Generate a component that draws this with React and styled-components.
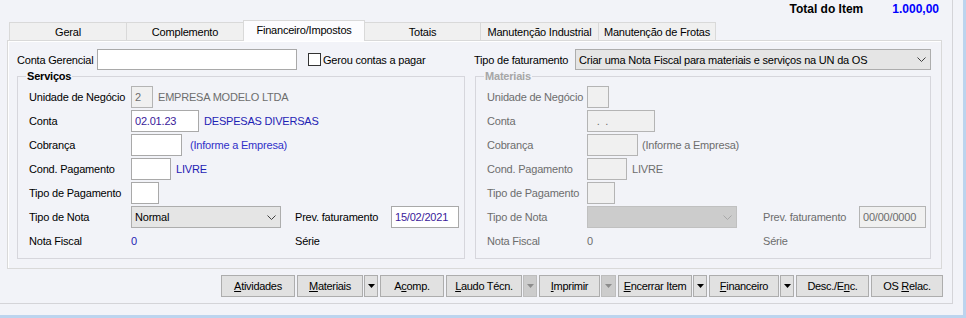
import React from 'react';
import styled, { createGlobalStyle } from 'styled-components';

const Global = createGlobalStyle`
  html, body { margin: 0; padding: 0; background: #f2f3f8; }
  body {
    font-family: "Liberation Sans", Arial, sans-serif;
    font-size: 11px;
    letter-spacing: -0.2px;
    color: #000;
  }
  * { box-sizing: border-box; }
`;

const Window = styled.div`
  width: 966px;
  height: 318px;
  border-right: 3px solid #bcd4ee;
  border-bottom: 3px solid #bcd4ee;
  background: #f2f3f8;
`;

const Frame = styled.div`
  width: 953px;
  height: 304px;
  border-right: 1px solid #d4d4d8;
  border-bottom: 1px solid #d4d4d8;
  display: flex;
  flex-direction: column;
`;

const Header = styled.div`
  height: 20px;
  display: flex;
  justify-content: flex-end;
  align-items: flex-start;
  gap: 29px;
  padding-right: 13px;
  font-size: 12px;
  font-weight: bold;
  line-height: 18px;
  letter-spacing: 0;
`;

const Total = styled.span`
  color: #0000ff;
`;

const TabStrip = styled.div`
  display: flex;
  align-items: flex-end;
  height: 20px;
  padding-left: 9px;
  position: relative;
  z-index: 1;
`;

const Tab = styled.div`
  width: ${p => p.$w}px;
  height: ${p => (p.$active ? 21 : 18)}px;
  margin-right: -1px;
  margin-bottom: ${p => (p.$active ? -1 : 0)}px;
  border: 1px solid #d9d9d9;
  border-bottom: none;
  background: ${p => (p.$active ? '#fcfcfe' : '#f0f0f0')};
  display: flex;
  align-items: center;
  justify-content: center;
  padding-bottom: ${p => (p.$active ? 2 : 0)}px;
  position: relative;
  z-index: ${p => (p.$active ? 2 : 1)};
`;

const Panel = styled.div`
  margin-left: 7px;
  width: 935px;
  height: 229px;
  border: 1px solid #d9d9d9;
  box-shadow: inset 1px 1px 0 #ffffff;
  padding: 8px 10px 0 9px;
  display: flex;
  flex-direction: column;
`;

const TopRow = styled.div`
  display: flex;
  align-items: center;
  height: 21px;
`;

const Label = styled.span`
  width: ${p => p.$w}px;
  flex-shrink: 0;
  white-space: nowrap;
  color: ${p => (p.$dim ? '#6d6d6d' : '#000')};
`;

const TextBox = styled.input`
  width: ${p => p.$w}px;
  height: ${p => p.$h || 22}px;
  flex-shrink: 0;
  margin: 0;
  padding: 0 3px;
  border: 1px solid ${p => (p.$off ? '#b4b4b4' : '#a9a9a9')};
  background: ${p => (p.$off ? '#f0f0f0' : '#ffffff')};
  color: ${p => (p.$off ? '#6d6d6d' : '#3a1a9a')};
  font: inherit;
  letter-spacing: inherit;
  outline: none;
  white-space: pre;
`;

const CheckWrap = styled.label`
  display: flex;
  align-items: center;
  width: 166px;
  margin-left: 11px;
  flex-shrink: 0;
`;

const CheckBox = styled.span`
  width: 13px;
  height: 13px;
  border: 1px solid #333333;
  background: #ffffff;
  margin-right: 2px;
  flex-shrink: 0;
`;

const ComboBox = styled.div`
  width: ${p => p.$w}px;
  height: ${p => p.$h || 22}px;
  flex-shrink: 0;
  border: 1px solid ${p => (p.$off ? '#c0c0c0' : '#adadad')};
  background: ${p => (p.$off ? '#cccccc' : '#e5e5e5')};
  display: flex;
  align-items: center;
  justify-content: space-between;
  padding: 0 4px 0 3px;
  white-space: nowrap;
  overflow: hidden;
`;

const Groups = styled.div`
  display: flex;
  gap: 10px;
`;

const Group = styled.fieldset`
  margin: 0;
  width: ${p => p.$w}px;
  height: 189px;
  min-width: 0;
  padding: 2px 0 5px 0;
  border: 1px solid #d6d6dc;
`;

const Legend = styled.legend`
  margin-left: 8px;
  padding: 0 1px;
  font-weight: bold;
  line-height: 13px;
  color: ${p => (p.$off ? '#a6a6a6' : '#000')};
`;

const Rows = styled.div`
  display: flex;
  flex-direction: column;
  padding-left: 11px;
`;

const Row = styled.div`
  display: flex;
  align-items: center;
  height: 24px;
  white-space: nowrap;
`;

const Value = styled.span`
  margin-left: ${p => (p.$ml == null ? 5 : p.$ml)}px;
  color: ${p => p.$c || '#1e22b4'};
  white-space: nowrap;
`;

const Cell = styled.div`
  width: ${p => p.$w}px;
  flex-shrink: 0;
  display: flex;
  align-items: center;
`;

const ButtonBar = styled.div`
  display: flex;
  justify-content: flex-end;
  gap: 2px;
  padding-right: 9px;
  margin-top: 6px;
`;

const Split = styled.div`
  display: flex;
  gap: 1px;
`;

const Button = styled.button`
  width: ${p => p.$w}px;
  height: 22px;
  margin: 0;
  padding: 0;
  border: 1px solid #adadad;
  background: #e1e1e1;
  color: #000;
  font: inherit;
  letter-spacing: -0.3px;
  white-space: nowrap;
`;

const ArrowButton = styled.button`
  width: ${p => p.$w || 14}px;
  height: 22px;
  margin: 0;
  padding: 0;
  border: 1px solid ${p => (p.$off ? '#bdbdbd' : '#adadad')};
  background: ${p => (p.$off ? '#cccccc' : '#e1e1e1')};
  display: flex;
  align-items: center;
  justify-content: center;
`;

const Chevron = ({ color = '#404040' }) => (
  <svg width="9" height="5" viewBox="0 0 9 5">
    <path d="M0.5 0.5 L4.5 4.5 L8.5 0.5" fill="none" stroke={color} strokeWidth="1" />
  </svg>
);

const Tri = ({ color = '#000' }) => (
  <svg width="7" height="4" viewBox="0 0 7 4">
    <polygon points="0,0 7,0 3.5,4" fill={color} />
  </svg>
);

const tabs = [
  ['Geral', 118],
  ['Complemento', 118],
  ['Financeiro/Impostos', 122, true],
  ['Totais', 117],
  ['Manutenção Industrial', 119],
  ['Manutenção de Frotas', 118],
];

function Servicos() {
  return (
    <Group $w={448}>
      <Legend>Serviços</Legend>
      <Rows>
        <Row>
          <Label $w={102}>Unidade de Negócio</Label>
          <TextBox $w={22} $off readOnly value="2" />
          <Value $c="#6d6d6d" $ml={5}>EMPRESA MODELO LTDA</Value>
        </Row>
        <Row>
          <Label $w={102}>Conta</Label>
          <TextBox $w={68} readOnly value="02.01.23" />
          <Value $ml={5}>DESPESAS DIVERSAS</Value>
        </Row>
        <Row>
          <Label $w={102}>Cobrança</Label>
          <TextBox $w={51} readOnly value="" />
          <Value $ml={8} $c="#3030c8">(Informe a Empresa)</Value>
        </Row>
        <Row>
          <Label $w={102}>Cond. Pagamento</Label>
          <TextBox $w={40} readOnly value="" />
          <Value $ml={5}>LIVRE</Value>
        </Row>
        <Row>
          <Label $w={102}>Tipo de Pagamento</Label>
          <TextBox $w={28} readOnly value="" />
        </Row>
        <Row>
          <Label $w={102}>Tipo de Nota</Label>
          <Cell $w={164}>
            <ComboBox $w={150}>
              <span>Normal</span>
              <Chevron />
            </ComboBox>
          </Cell>
          <Label $w={96}>Prev. faturamento</Label>
          <TextBox $w={68} readOnly value="15/02/2021" />
        </Row>
        <Row>
          <Label $w={102}>Nota Fiscal</Label>
          <Cell $w={164}>
            <Value $ml={0}>0</Value>
          </Cell>
          <Label $w={96}>Série</Label>
        </Row>
      </Rows>
    </Group>
  );
}

function Materiais() {
  const g = '#6d6d6d';
  return (
    <Group $w={456}>
      <Legend $off>Materiais</Legend>
      <Rows>
        <Row>
          <Label $w={100} $dim>Unidade de Negócio</Label>
          <TextBox $w={22} $off readOnly value="" />
        </Row>
        <Row>
          <Label $w={100} $dim>Conta</Label>
          <TextBox $w={68} $off readOnly value="  .  ." />
        </Row>
        <Row>
          <Label $w={100} $dim>Cobrança</Label>
          <TextBox $w={51} $off readOnly value="" />
          <Value $ml={4} $c={g}>(Informe a Empresa)</Value>
        </Row>
        <Row>
          <Label $w={100} $dim>Cond. Pagamento</Label>
          <TextBox $w={40} $off readOnly value="" />
          <Value $ml={5} $c={g}>LIVRE</Value>
        </Row>
        <Row>
          <Label $w={100} $dim>Tipo de Pagamento</Label>
          <TextBox $w={28} $off readOnly value="" />
        </Row>
        <Row>
          <Label $w={100} $dim>Tipo de Nota</Label>
          <Cell $w={176}>
            <ComboBox $w={150} $off>
              <span />
              <Chevron color="#a8a8a8" />
            </ComboBox>
          </Cell>
          <Label $w={96} $dim>Prev. faturamento</Label>
          <TextBox $w={67} $off readOnly value="00/00/0000" />
        </Row>
        <Row>
          <Label $w={100} $dim>Nota Fiscal</Label>
          <Cell $w={176}>
            <Value $ml={0} $c={g}>0</Value>
          </Cell>
          <Label $w={96} $dim>Série</Label>
        </Row>
      </Rows>
    </Group>
  );
}

export default function App() {
  return (
    <>
      <Global />
      <Window>
        <Frame>
          <Header>
            <span>Total do Item</span>
            <Total>1.000,00</Total>
          </Header>
          <TabStrip>
            {tabs.map(([t, w, a]) => (
              <Tab key={t} $w={w} $active={a}>{t}</Tab>
            ))}
          </TabStrip>
          <Panel>
            <TopRow>
              <Label $w={80}>Conta Gerencial</Label>
              <TextBox $w={200} $h={21} readOnly value="" />
              <CheckWrap>
                <CheckBox />
                <span>Gerou contas a pagar</span>
              </CheckWrap>
              <Label $w={101}>Tipo de faturamento</Label>
              <ComboBox $w={356} $h={21}>
                <span>Criar uma Nota Fiscal para materiais e serviços na UN da OS</span>
                <Chevron />
              </ComboBox>
            </TopRow>
            <Groups>
              <Servicos />
              <Materiais />
            </Groups>
          </Panel>
          <ButtonBar>
            <Button $w={74}><u>A</u>tividades</Button>
            <Split>
              <Button $w={66}><u>M</u>ateriais</Button>
              <ArrowButton><Tri /></ArrowButton>
            </Split>
            <Button $w={64}>A<u>c</u>omp.</Button>
            <Split>
              <Button $w={76}><u>L</u>audo Técn.</Button>
              <ArrowButton $off><Tri color="#8c8c8c" /></ArrowButton>
            </Split>
            <Split>
              <Button $w={61}><u>I</u>mprimir</Button>
              <ArrowButton $off $w={15}><Tri color="#8c8c8c" /></ArrowButton>
            </Split>
            <Split>
              <Button $w={74}><u>E</u>ncerrar Item</Button>
              <ArrowButton><Tri /></ArrowButton>
            </Split>
            <Split>
              <Button $w={70}><u>F</u>inanceiro</Button>
              <ArrowButton><Tri /></ArrowButton>
            </Split>
            <Button $w={73}>Desc./E<u>n</u>c.</Button>
            <Button $w={72}>OS <u>R</u>elac.</Button>
          </ButtonBar>
        </Frame>
      </Window>
    </>
  );
}
